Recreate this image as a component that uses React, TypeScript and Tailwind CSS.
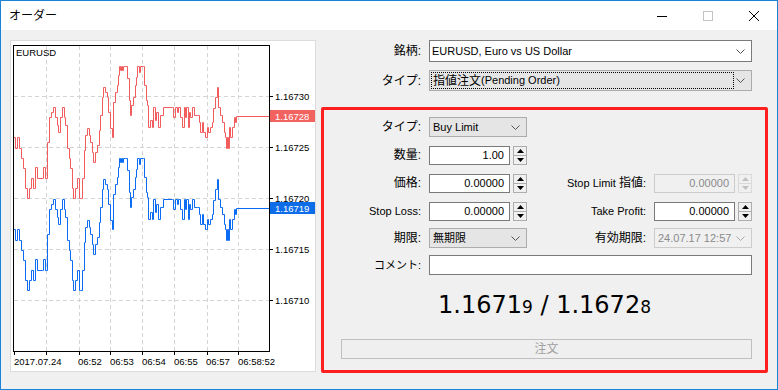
const FONT = "font-['Liberation_Sans','Noto_Sans_CJK_JP',sans-serif]";

// ask line, screen coords (bid is the same shape shifted down by the spread)
const ASK: [number, number][] = [
  [13, 137], [15, 148], [17, 137], [19, 148], [21, 158], [23, 168], [25, 188], [27, 198], [29, 188], [31, 178],
  [33, 188], [35, 167], [37, 178], [42, 178], [43, 167], [45, 178], [47, 142], [49, 117], [51, 112], [53, 107],
  [55, 117], [57, 125], [58, 132], [60, 117], [62, 107], [64, 117], [65, 125], [67, 148], [69, 158], [70, 168],
  [72, 188], [73, 198], [75, 188], [77, 178], [79, 198], [80, 198], [82, 178], [84, 150], [85, 135], [87, 128],
  [89, 135], [90, 142], [92, 152], [93, 162], [95, 152], [97, 145], [99, 130], [100, 115], [102, 97], [103, 87],
  [105, 92], [107, 97], [108, 112], [110, 128], [112, 137], [113, 102], [115, 92], [117, 85], [118, 75], [119, 66],
  [120, 70], [121, 66], [122, 70], [123, 66], [125, 66], [127, 78], [129, 100], [130, 115], [131, 105], [133, 97],
  [135, 85], [136, 77], [137, 66], [139, 72], [140, 66], [143, 66], [144, 85], [146, 100], [147, 105], [148, 127],
  [150, 120], [152, 127], [153, 107], [155, 120], [156, 112], [158, 127], [160, 115], [163, 107], [172, 107], [173, 117],
  [175, 107], [177, 112], [178, 107], [180, 117], [182, 127], [184, 107], [185, 117], [186, 107], [188, 127], [189, 112],
  [190, 117], [192, 107], [194, 115], [197, 115], [199, 122], [200, 132], [202, 122], [203, 132], [205, 137], [207, 127],
  [208, 132], [210, 127], [212, 122], [213, 108], [215, 97], [217, 87], [218, 107], [220, 115], [222, 122], [224, 132],
  [225, 137], [226, 148], [227, 137], [228, 148], [229, 127], [230, 137], [232, 127], [234, 117], [235, 122], [236, 116],
  [269, 116],
];

function stepPath(pts: [number, number][], dy: number) {
  let d = `M${pts[0][0] + 0.5} ${pts[0][1] + dy + 0.5}`;
  for (let i = 1; i < pts.length; i++) d += ` H${pts[i][0] + 0.5} V${pts[i][1] + dy + 0.5}`;
  return d;
}

const GRID_Y = [96, 147, 198, 249, 300];
const GRID_X = [46, 79, 110, 142, 174, 207, 238];
const PRICES = ["1.16730", "1.16725", "1.16720", "1.16715", "1.16710"];
const TIMES: [number, string][] = [
  [14, "2017.07.24"], [78, "06:52"], [110, "06:53"], [142, "06:54"], [174, "06:55"], [206, "06:57"], [238, "06:58:52"],
];

function Chart() {
  return (
    <div className="h-[332px] w-[306px] shrink-0 border border-[#dcdcdc] bg-white">
      <svg width="304" height="330" className="block">
        <g transform="translate(-11,-41)" fontFamily="Liberation Sans, sans-serif" fontSize="9.5">
          {GRID_Y.map((y) => (
            <line key={y} x1="14" x2="269" y1={y + 0.5} y2={y + 0.5} stroke="#d4d4d4" strokeDasharray="4 3" />
          ))}
          {GRID_X.map((x) => (
            <line key={x} x1={x + 0.5} x2={x + 0.5} y1="46" y2="351" stroke="#d4d4d4" strokeDasharray="4 3" />
          ))}
          <path d={stepPath(ASK, 0)} fill="none" stroke="#f25c5c" />
          <path d={stepPath(ASK, 92)} fill="none" stroke="#0a6cf5" />
          <rect x="13.5" y="45.5" width="256" height="306" fill="none" stroke="#000" />
          <text x="16" y="56" fill="#000">EURUSD</text>
          {GRID_Y.map((y, i) => (
            <g key={y}>
              <line x1="270" x2="273" y1={y + 0.5} y2={y + 0.5} stroke="#000" />
              <text x="275" y={y + 4} fill="#000">{PRICES[i]}</text>
            </g>
          ))}
          {[14, ...GRID_X].map((x) => (
            <line key={x} x1={x + 0.5} x2={x + 0.5} y1="352" y2="355" stroke="#000" />
          ))}
          {TIMES.map(([x, t]) => (
            <text key={t} x={x} y="365" fill="#000">{t}</text>
          ))}
          <rect x="270" y="110" width="46" height="12" fill="#f2625f" />
          <text x="275" y="119.5" fill="#fff">1.16728</text>
          <rect x="270" y="202" width="46" height="12" fill="#0d6de8" />
          <text x="275" y="211.5" fill="#fff">1.16719</text>
        </g>
      </svg>
    </div>
  );
}

function Chevron({ light }: { light?: boolean }) {
  return (
    <svg width="9" height="5" className="mr-[6px] shrink-0">
      <polyline points="0.5,0.5 4.5,4.5 8.5,0.5" fill="none" stroke={light ? "#a8a8a8" : "#555"} />
    </svg>
  );
}

function Combo({ text, disabled, wide }: { text: string; disabled?: boolean; wide?: boolean }) {
  return (
    <div
      className={`flex h-[20px] items-center justify-between border ${
        disabled ? "border-[#cccccc] bg-[#f0f0f0] text-[#8a8a8a]" : "border-[#acacac] bg-[#e5e5e5] text-black"
      } ${wide ? "w-full" : "w-[98px]"} pl-[3px] text-[11px] leading-none`}
    >
      <span>{text}</span>
      <Chevron light={disabled} />
    </div>
  );
}

function Tri({ up, color }: { up?: boolean; color: string }) {
  return (
    <svg width="7" height="4">
      <polygon points={up ? "0,4 3.5,0 7,4" : "0,0 3.5,4 7,0"} fill={color} />
    </svg>
  );
}

function NumInput({ value, disabled }: { value: string; disabled?: boolean }) {
  return (
    <div className="flex h-[19px] w-[98px]">
      <div
        className={`flex w-[81px] items-center justify-end border pr-[5px] text-[11px] leading-none ${
          disabled ? "border-[#cccccc] bg-[#f0f0f0] text-[#8a8a8a]" : "border-[#7a7a7a] bg-white text-black"
        }`}
      >
        {value}
      </div>
      <div
        className={`ml-[3px] flex w-[14px] flex-col border ${
          disabled ? "border-[#d9d9d9]" : "border-[#adadad]"
        } bg-[#f0f0f0]`}
      >
        <div className={`flex flex-1 items-center justify-center border-b ${disabled ? "border-[#d9d9d9]" : "border-[#adadad]"}`}>
          <Tri up color={disabled ? "#c0c0c0" : "#000"} />
        </div>
        <div className="flex flex-1 items-center justify-center">
          <Tri color={disabled ? "#c0c0c0" : "#000"} />
        </div>
      </div>
    </div>
  );
}

function Label({ children, jp, w }: { children: React.ReactNode; jp?: boolean; w?: boolean }) {
  return (
    <div className={`${w ? "w-[97px]" : "flex-1"} text-right leading-none ${jp ? "text-[12px]" : "text-[11px]"} text-black`}>
      {children}
    </div>
  );
}

export default function App() {
  return (
    <div className={`flex h-[390px] w-[778px] flex-col border border-[#1883d7] bg-[#f0f0f0] ${FONT}`}>
      {/* Title bar */}
      <div className="flex h-[29px] shrink-0 items-center bg-white">
        <span className="ml-[8px] flex-1 text-[12px] leading-none text-black">オーダー</span>
        <div className="flex h-full w-[46px] items-center justify-center">
          <svg width="10" height="10"><line x1="0" x2="10" y1="5.5" y2="5.5" stroke="#000" /></svg>
        </div>
        <div className="flex h-full w-[46px] items-center justify-center">
          <svg width="10" height="10"><rect x="0.5" y="0.5" width="9" height="9" fill="none" stroke="#c4c4c4" /></svg>
        </div>
        <div className="flex h-full w-[46px] items-center justify-center">
          <svg width="10" height="10">
            <line x1="0" y1="0" x2="10" y2="10" stroke="#000" />
            <line x1="10" y1="0" x2="0" y2="10" stroke="#000" />
          </svg>
        </div>
      </div>

      {/* Body */}
      <div className="flex pl-[9px] pt-[10px]">
        <Chart />

        <div className="ml-[5px] flex w-[447px] flex-col">
          <div className="flex h-[22px] items-center pr-[16px]">
            <div className="w-[100px] text-right text-[12px] leading-none">銘柄:</div>
            <div className="ml-[8px] flex h-full flex-1 items-center justify-between border border-[#7a7a7a] bg-white pl-[2px] text-[11px] leading-none">
              <span>EURUSD, Euro vs US Dollar</span>
              <Chevron />
            </div>
          </div>
          <div className="mt-[8px] flex h-[21px] items-center pr-[16px]">
            <div className="w-[100px] text-right text-[12px] leading-none">タイプ:</div>
            <div className="ml-[8px] flex h-full flex-1 items-center justify-between border border-[#acacac] bg-[#e5e5e5] text-[11px] leading-none">
              <div className="ml-px flex h-[17px] w-[303px] items-center border border-dotted border-black pl-px">
                <span className="text-[12px]">指値注文</span>(Pending Order)
              </div>
              <Chevron />
            </div>
          </div>

          {/* Order group */}
          <div className="mt-[16px] flex h-[266px] flex-col rounded-[2px] border-[3px] border-[#ff1f1f] pr-[13px] pt-[7px]">
            <div className="flex h-[20px] items-center">
              <Label w jp>タイプ:</Label>
              <div className="ml-[8px]"><Combo text="Buy Limit" /></div>
            </div>
            <div className="mt-[8px] flex h-[20px] items-center">
              <Label w jp>数量:</Label>
              <div className="ml-[8px]"><NumInput value="1.00" /></div>
            </div>
            <div className="mt-[8px] flex h-[20px] items-center">
              <Label w jp>価格:</Label>
              <div className="ml-[8px]"><NumInput value="0.00000" /></div>
              <Label>Stop Limit <span className="text-[12px]">指値</span>:</Label>
              <div className="ml-[8px]"><NumInput value="0.00000" disabled /></div>
            </div>
            <div className="mt-[8px] flex h-[20px] items-center">
              <Label w>Stop Loss:</Label>
              <div className="ml-[8px]"><NumInput value="0.00000" /></div>
              <Label>Take Profit:</Label>
              <div className="ml-[8px]"><NumInput value="0.00000" /></div>
            </div>
            <div className="mt-[7px] flex h-[20px] items-center">
              <Label w jp>期限:</Label>
              <div className="ml-[8px]"><Combo text="無期限" /></div>
              <Label jp>有効期限:</Label>
              <div className="ml-[8px]"><Combo text="24.07.17 12:57" disabled /></div>
            </div>
            <div className="mt-[7px] flex h-[20px] items-center">
              <Label w><span className="text-[11px]">コメント:</span></Label>
              <div className="ml-[8px] h-[20px] flex-1 border border-[#7a7a7a] bg-white" />
            </div>

            <div className="mt-[15px] h-[30px] pl-[13px] text-center font-['DejaVu_Sans',sans-serif] text-[24px] leading-[30px] text-black">
              1.1671<span className="text-[17px]">9</span> / 1.1672<span className="text-[17px]">8</span>
            </div>

            <div className="ml-[17px] mt-[19px] flex h-[20px] items-center justify-center border border-[#bfbfbf] bg-[#efefef] text-[12px] leading-none text-[#a0a0a0]">
              注文
            </div>
          </div>
        </div>
      </div>
    </div>
  );
}
